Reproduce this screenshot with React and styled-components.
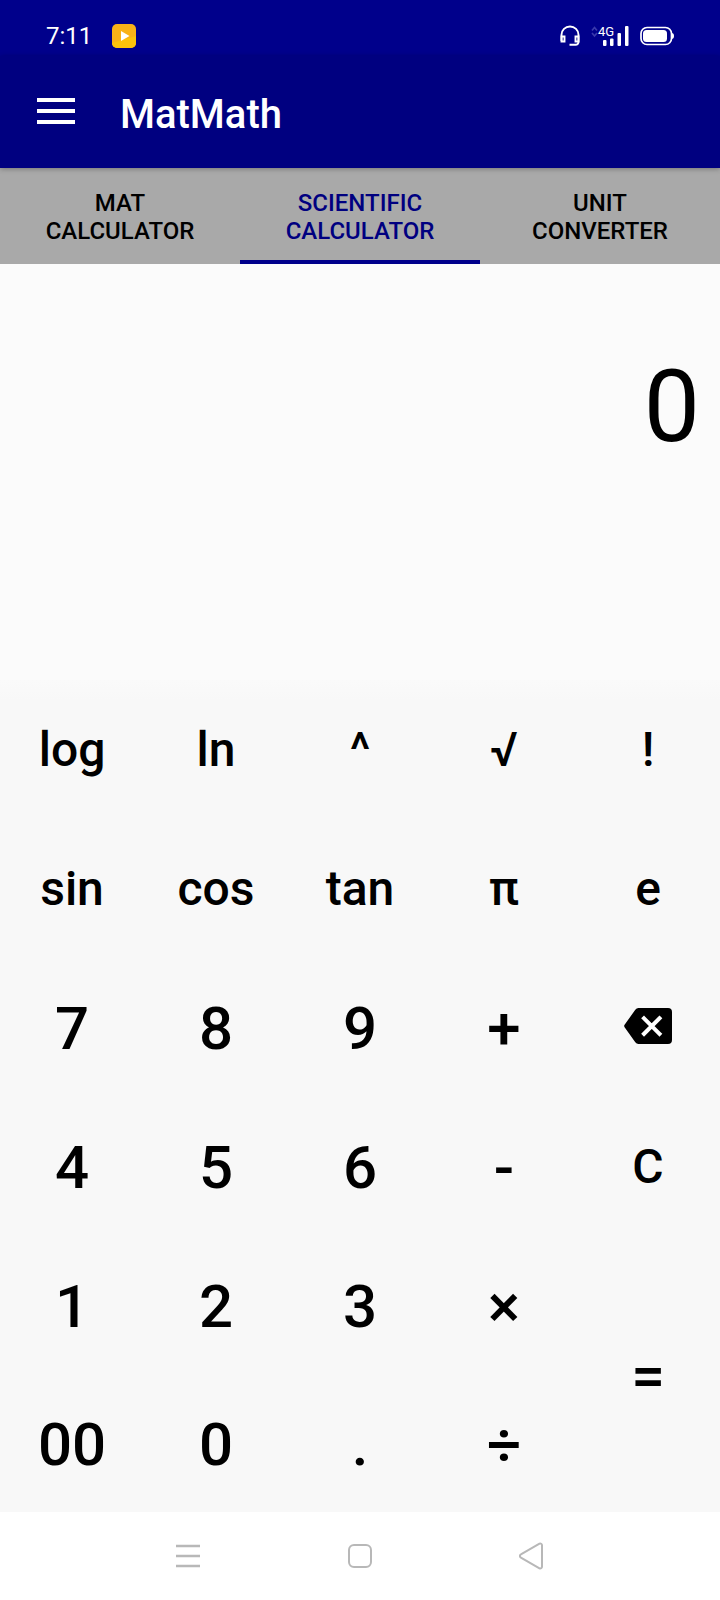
import React, { useState } from "react";
import styled, { createGlobalStyle } from "styled-components";

const GlobalStyle = createGlobalStyle`
  *, *::before, *::after { box-sizing: border-box; }
  body {
    margin: 0;
    background: #fff;
    font-family: Roboto, "Liberation Sans", sans-serif;
    color: #000;
  }
  button {
    margin: 0;
    padding: 0;
    border: 0;
    background: none;
    color: inherit;
    font: inherit;
    cursor: pointer;
  }
  svg { display: block; }
`;

const Screen = styled.div`
  display: flex;
  flex-direction: column;
  min-height: 100vh;
`;

const StatusBar = styled.div`
  display: flex;
  align-items: center;
  justify-content: space-between;
  height: 56px;
  padding: 16px 46px 0;
  background: #00008b;
  color: #fff;
`;

const StatusGroup = styled.div`
  display: flex;
  align-items: center;
  gap: ${(p) => p.$gap}px;
`;

const Clock = styled.time`
  font-size: 24px;
  line-height: 28px;
`;

const AppBar = styled.header`
  position: relative;
  display: flex;
  align-items: center;
  gap: 45px;
  height: 112px;
  padding: 0 37px;
  background: #000080;
  color: #fff;
  box-shadow: 0 1px 5px rgba(0, 0, 0, 0.3);
`;

const MenuButton = styled.button`
  && {
    padding-bottom: 2px;
  }
`;

const Title = styled.h1`
  margin: 6px 0 0;
  font-size: 40px;
  line-height: 48px;
  font-weight: 500;
`;

const Tabs = styled.nav`
  display: grid;
  grid-template-columns: repeat(3, 1fr);
  height: 96px;
  background: #a9a9a9;
`;

const Tab = styled.button`
  && {
    padding: 6px 32px 0;
    border-bottom: 4px solid ${(p) => (p.$active ? "#00008b" : "transparent")};
    color: ${(p) => (p.$active ? "#000080" : "#000")};
    font-size: 24px;
    line-height: 28px;
    font-weight: 500;
    text-transform: uppercase;
  }
`;

const Display = styled.output`
  flex: 1 0 416px;
  padding: 84px 20px 0;
  background: #fbfbfb;
  font-size: 100px;
  line-height: 118px;
  text-align: right;
`;

const Keypad = styled.main`
  display: grid;
  grid-template-columns: repeat(5, 1fr);
  grid-template-rows: repeat(5, 139px) 137px;
  background: linear-gradient(#fafafa, #f8f8f8 20px);
`;

const Key = styled.button`
  && {
    display: flex;
    align-items: center;
    justify-content: center;
    grid-row: span ${(p) => (p.$tall ? 2 : 1)};
    padding-top: ${(p) => (p.$small ? 0 : 2)}px;
    font-size: ${(p) => (p.$small ? 48 : 60)}px;
    font-weight: 500;
  }
`;

const SystemNav = styled.footer`
  display: flex;
  align-items: center;
  justify-content: center;
  gap: 132px;
  height: 88px;
  background: #fff;
  color: #b8b8b8;
`;

const NavButton = styled.button`
  && {
    display: grid;
    place-items: center;
    width: 40px;
    height: 48px;
  }
`;

const PlayBadge = () => (
  <svg width="24" height="24" viewBox="0 0 24 24" aria-hidden="true">
    <rect width="24" height="24" rx="5" fill="#f9b218" />
    <path d="M24 12v7a5 5 0 0 1-5 5H5a5 5 0 0 1-5-5z" fill="#fcc30b" />
    <path d="M9 7l8.500 5L9 17z" fill="#fff" />
  </svg>
);

const Headphones = () => (
  <svg width="20" height="22" viewBox="0 0 20 22" fill="none" stroke="#fff" strokeWidth="1.900" aria-hidden="true">
    <path d="M1.500 16V9.800a8.500 8.300 0 0 1 17 0V17a3 3 0 0 1-3 2.800H9.500" />
    <path d="M1.500 11.500h3v5h-3zM15.500 11.500h3v5h-3z" />
  </svg>
);

const SignalWrap = styled.span`
  position: relative;
  display: block;
`;

const NetworkLabel = styled.span`
  position: absolute;
  left: 7px;
  top: 0;
  font-size: 13px;
  line-height: 14px;
`;

const Signal = () => (
  <SignalWrap>
    <svg width="38" height="22" viewBox="0 0 38 22" aria-hidden="true">
      <path d="M1 5.500l2.500-3L6 5.500M1 8l2.500 3L6 8" fill="none" stroke="#3a3aac" strokeWidth="1.600" />
      <g fill="#fff">
        <rect x="12" y="15" width="3.500" height="6" rx="1" />
        <rect x="19" y="13.500" width="3.500" height="7.500" rx="1" />
        <rect x="26.500" y="8" width="3.500" height="13" rx="1" />
        <rect x="34" y="1" width="3.500" height="20" rx="1" />
      </g>
    </svg>
    <NetworkLabel>4G</NetworkLabel>
  </SignalWrap>
);

const Battery = () => (
  <svg width="34" height="20" viewBox="0 0 34 20" aria-hidden="true">
    <rect x="1" y="1.500" width="30.500" height="17" rx="6" fill="none" stroke="#fff" strokeWidth="1.700" />
    <rect x="3" y="4" width="24" height="12" rx="3.500" fill="#fff" />
    <path d="M31.500 7q2.500 0 2.500 3t-2.500 3z" fill="#fff" />
  </svg>
);

const MenuIcon = () => (
  <svg width="38" height="26" viewBox="0 0 38 26" fill="#fff" aria-hidden="true">
    <path d="M0 0h38v4H0zM0 11h38v4H0zM0 22h38v4H0z" />
  </svg>
);

const BackspaceIcon = () => (
  <svg width="48" height="36" viewBox="0 0 48 36" aria-hidden="true">
    <path d="M14.500 0H44a4 4 0 0 1 4 4v28a4 4 0 0 1-4 4H14.500a4 4 0 0 1-3.200-1.700L.6 19.200a2 2 0 0 1 0-2.400L11.300 1.700A4 4 0 0 1 14.500 0z" />
    <path d="M20 10.300l15.500 15.500M35.500 10.300L20 25.800" stroke="#fff" strokeWidth="4" strokeLinecap="square" />
  </svg>
);

const IconSlot = styled.span`
  padding-bottom: 5px;
`;

const RecentsIcon = () => (
  <svg width="24" height="28" viewBox="0 0 24 28" fill="none" stroke="currentColor" strokeWidth="2.400" aria-hidden="true">
    <path d="M0 4h24M0 14h24M0 24h24" />
  </svg>
);

const HomeIcon = () => (
  <svg width="24" height="24" viewBox="0 0 24 24" fill="none" stroke="currentColor" strokeWidth="2" aria-hidden="true">
    <rect x="1" y="1" width="22" height="22" rx="5" />
  </svg>
);

const BackIcon = () => (
  <svg width="26" height="28" viewBox="0 0 26 28" fill="none" stroke="currentColor" strokeWidth="2" strokeLinejoin="round" aria-hidden="true">
    <path d="M20.500 1.700L1.900 12.400a1.800 1.800 0 0 0 0 3.200L20.500 26.300a1.700 1.700 0 0 0 2.500-1.500V3.200a1.700 1.700 0 0 0-2.500-1.500z" />
  </svg>
);

const TABS = ["Mat Calculator", "Scientific Calculator", "Unit Converter"];

const KEYS = [
  { label: "log", small: true },
  { label: "ln", small: true },
  { label: "^", small: true },
  { label: "√", small: true },
  { label: "!", small: true },
  { label: "sin", small: true },
  { label: "cos", small: true },
  { label: "tan", small: true },
  { label: "π", small: true },
  { label: "e", small: true },
  { label: "7" },
  { label: "8" },
  { label: "9" },
  { label: "+" },
  { label: "Backspace", icon: <BackspaceIcon /> },
  { label: "4" },
  { label: "5" },
  { label: "6" },
  { label: "-" },
  { label: "C", small: true },
  { label: "1" },
  { label: "2" },
  { label: "3" },
  { label: "×" },
  { label: "=", tall: true },
  { label: "00" },
  { label: "0" },
  { label: "." },
  { label: "÷" },
];

export default function App() {
  const [active, setActive] = useState(1);
  return (
    <Screen>
      <GlobalStyle />
      <StatusBar>
        <StatusGroup $gap={20}>
          <Clock>7:11</Clock>
          <PlayBadge />
        </StatusGroup>
        <StatusGroup $gap={11}>
          <Headphones />
          <Signal />
          <Battery />
        </StatusGroup>
      </StatusBar>
      <AppBar>
        <MenuButton type="button" aria-label="Menu">
          <MenuIcon />
        </MenuButton>
        <Title>MatMath</Title>
      </AppBar>
      <Tabs>
        {TABS.map((name, i) => (
          <Tab key={name} type="button" $active={i === active} onClick={() => setActive(i)}>
            {name}
          </Tab>
        ))}
      </Tabs>
      <Display>0</Display>
      <Keypad>
        {KEYS.map((k) => (
          <Key
            key={k.label}
            type="button"
            $small={k.small}
            $tall={k.tall}
            aria-label={k.icon ? k.label : undefined}
          >
            {k.icon ? <IconSlot>{k.icon}</IconSlot> : k.label}
          </Key>
        ))}
      </Keypad>
      <SystemNav>
        <NavButton type="button" aria-label="Recent apps">
          <RecentsIcon />
        </NavButton>
        <NavButton type="button" aria-label="Home">
          <HomeIcon />
        </NavButton>
        <NavButton type="button" aria-label="Back">
          <BackIcon />
        </NavButton>
      </SystemNav>
    </Screen>
  );
}
